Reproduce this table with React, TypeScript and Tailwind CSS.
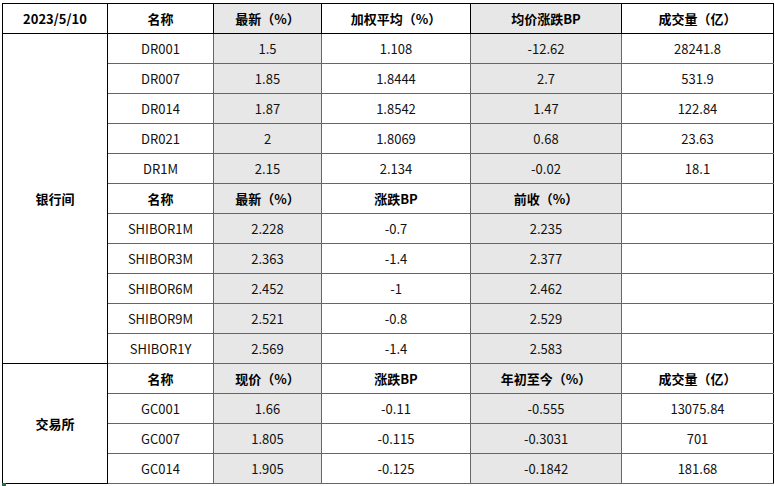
// Money-market snapshot table — interbank repo (DR), SHIBOR and exchange repo (GC)
// rendered as a spreadsheet-style grid with alternating shaded columns.

type Row = string[];

const drHead = ["名称", "最新（%）", "加权平均（%）", "均价涨跌BP", "成交量（亿）"];
const drRows: Row[] = [
  ["DR001", "1.5", "1.108", "-12.62", "28241.8"],
  ["DR007", "1.85", "1.8444", "2.7", "531.9"],
  ["DR014", "1.87", "1.8542", "1.47", "122.84"],
  ["DR021", "2", "1.8069", "0.68", "23.63"],
  ["DR1M", "2.15", "2.134", "-0.02", "18.1"],
];
const shiborHead = ["名称", "最新（%）", "涨跌BP", "前收（%）", ""];
const shiborRows: Row[] = [
  ["SHIBOR1M", "2.228", "-0.7", "2.235", ""],
  ["SHIBOR3M", "2.363", "-1.4", "2.377", ""],
  ["SHIBOR6M", "2.452", "-1", "2.462", ""],
  ["SHIBOR9M", "2.521", "-0.8", "2.529", ""],
  ["SHIBOR1Y", "2.569", "-1.4", "2.583", ""],
];
const gcHead = ["名称", "现价（%）", "涨跌BP", "年初至今（%）", "成交量（亿）"];
const gcRows: Row[] = [
  ["GC001", "1.66", "-0.11", "-0.555", "13075.84"],
  ["GC007", "1.805", "-0.115", "-0.3031", "701"],
  ["GC014", "1.905", "-0.125", "-0.1842", "181.68"],
];

// columns 2 and 4 of the data area (index 1, 3) are shaded
const shade = (i: number) => (i === 1 || i === 3 ? "bg-[#e7e7e7]" : "bg-white");

function Cells({ row, bold, topBlack }: { row: Row; bold?: boolean; topBlack?: boolean }) {
  return (
    <>
      {row.map((v, i) => (
        <td
          key={i}
          className={`h-[30px] p-0 text-center border border-[#666] ${shade(i)} ${
            bold ? "font-bold text-black" : "text-[#111]"
          } ${i === 0 ? "border-l-black" : ""} ${topBlack ? "border-t-black" : ""} ${
            i === 4 ? "border-r-black" : ""
          }`}
        >
          {v}
        </td>
      ))}
    </>
  );
}

export default function App() {
  return (
    <div className="w-[775px] h-[486px] bg-white relative pt-[3px] pl-[2px]">
      <table
        className="table-fixed border-collapse text-[13px] leading-none"
        style={{ fontFamily: '"Noto Sans CJK SC", "Noto Sans", sans-serif' }}
      >
        <colgroup>
          <col className="w-[105px]" />
          <col className="w-[106px]" />
          <col className="w-[108px]" />
          <col className="w-[149px]" />
          <col className="w-[151px]" />
          <col className="w-[152px]" />
        </colgroup>
        <tbody>
          <tr>
            <td className="h-[30px] p-0 text-center font-bold border border-black">2023/5/10</td>
            {drHead.map((v, i) => (
              <td
                key={i}
                className={`h-[30px] p-0 text-center font-bold border border-black ${shade(i)}`}
              >
                {v}
              </td>
            ))}
          </tr>
          {drRows.map((r, k) => (
            <tr key={r[0]}>
              {k === 0 && (
                <td rowSpan={11} className="p-0 text-center font-bold border border-black">
                  银行间
                </td>
              )}
              <Cells row={r} topBlack={k === 0} />
            </tr>
          ))}
          <tr>
            <Cells row={shiborHead} bold />
          </tr>
          {shiborRows.map((r) => (
            <tr key={r[0]}>
              <Cells row={r} />
            </tr>
          ))}
          <tr>
            <td rowSpan={4} className="p-0 text-center font-bold border border-black">
              交易所
            </td>
            <Cells row={gcHead} bold />
          </tr>
          {gcRows.map((r) => (
            <tr key={r[0]}>
              <Cells row={r} />
            </tr>
          ))}
        </tbody>
      </table>
      {/* spreadsheet selection handle */}
      <div className="absolute left-[2px] top-[483px] w-[4px] h-[3px] bg-[#217346]" />
    </div>
  );
}
